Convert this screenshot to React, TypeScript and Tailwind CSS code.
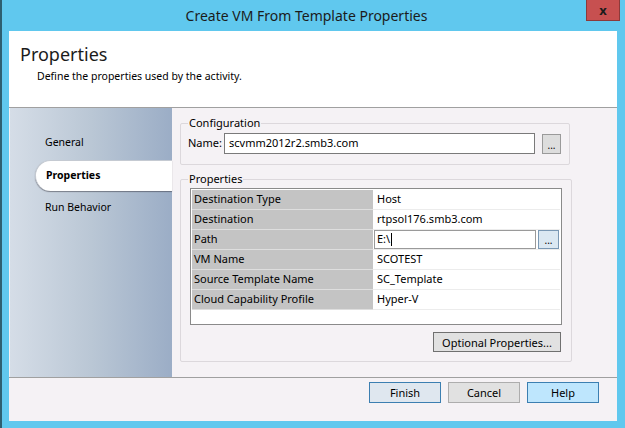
const rows: [string, string][] = [
  ['Destination Type', 'Host'],
  ['Destination', 'rtpsol176.smb3.com'],
  ['Path', 'E:\\'],
  ['VM Name', 'SCOTEST'],
  ['Source Template Name', 'SC_Template'],
  ['Cloud Capability Profile', 'Hyper-V'],
]

function Button({ label, variant = 'normal' }: { label: string; variant?: 'normal' | 'default' | 'hover' }) {
  const look =
    variant === 'default'
      ? 'bg-[#dfe7ef] border-[#3c7fb1]'
      : variant === 'hover'
        ? 'bg-[#bee6fd] border-[#3c7fb1]'
        : 'bg-[#e1e1e1] border-[#adadad]'
  return (
    <button className={`w-[72px] h-[21px] border text-[11px] text-black leading-none ${look}`}>{label}</button>
  )
}

export default function App() {
  return (
    <div className="w-[625px] h-[428px] bg-[#60c8ee] border-l-2 border-[#2e5f70] relative overflow-hidden font-['Noto_Sans',sans-serif] text-black">
      {/* Title bar */}
      <div className="h-[31px] flex items-center justify-center text-[14px] text-[#1b1b1b] pr-[14px]">
        Create VM From Template Properties
      </div>
      <div className="absolute top-0 right-[5px] w-[34px] h-[21px] bg-[#c75050] border border-t-0 border-[#8c3a3a] flex items-center justify-center text-[13px] font-bold text-[#1b1b1b] leading-none">
        x
      </div>

      <div className="ml-[7px] w-[608px] h-[390px] flex flex-col bg-[#f5f2f5]">
        {/* Header */}
        <div className="h-[77px] bg-white border-b border-[#a0a0a0] pl-[11px] pt-[11px]">
          <div className="text-[18px] leading-[24px] text-[#1b1b1b]">Properties</div>
          <div className="pl-[17px] mt-[3px] text-[10.5px] leading-[14px]">Define the properties used by the activity.</div>
        </div>

        {/* Middle */}
        <div className="h-[269px] flex">
          <div className="w-[162px] ml-[1px] bg-linear-to-r from-[#d5dde7] via-[#bac7d5] to-[#9badc6] pt-[25px] text-[10.5px]">
            <div className="pl-[35px] h-[20px] flex items-center">General</div>
            <div className="ml-[25px] mt-[7px] h-[31px] bg-white rounded-l-[16px] border-l border-t border-[#c5cad2] shadow-[0_1px_1px_rgba(60,60,70,0.55)] flex items-center pl-[10px] font-bold">
              Properties
            </div>
            <div className="pl-[35px] mt-[7px] h-[20px] flex items-center">Run Behavior</div>
          </div>

          <div className="flex-1 pl-[8px] pt-[8px] text-[11px]">
            {/* Configuration */}
            <fieldset className="w-[390px] border border-[#dcd8dc] rounded-[2px] px-[7px] pb-[10px]">
              <legend className="px-[1px] leading-[14px]">Configuration</legend>
              <div className="flex items-center mt-[3px]">
                <span className="w-[36px]">Name:</span>
                <div className="w-[311px] h-[21px] bg-white border border-[#7a7a7a] flex items-center pl-[4px]">
                  scvmm2012r2.smb3.com
                </div>
                <div className="ml-[7px] w-[19px] h-[20px] bg-[#dddddd] border border-[#9a9a9a] flex items-end justify-center pb-[3px] text-[10px] leading-none">
                  ...
                </div>
              </div>
            </fieldset>

            {/* Properties */}
            <fieldset className="mt-[7px] w-[390px] border border-[#dcd8dc] rounded-[2px] px-[9px] pb-[9px]">
              <legend className="-ml-[2px] px-[1px] leading-[14px]">Properties</legend>
              <div className="mt-[2px] w-[372px] h-[137px] bg-white border border-[#8a8a8a] p-[1px]">
                {rows.map(([label, value]) => (
                  <div key={label} className="flex h-[20px]">
                    <div className="w-[181px] bg-[#c4c4c4] border-b border-[#dedede] pl-[2px] flex items-center">{label}</div>
                    {label === 'Path' ? (
                      <div className="flex-1 flex border-b border-[#ececec]">
                        <div className="ml-[1px] w-[162px] h-[19px] border border-[#9a9a9a] flex items-center pl-[2px]">
                          {value}
                          <span className="ml-[1px] w-[1px] h-[13px] bg-black" />
                        </div>
                        <div className="ml-[2px] w-[21px] h-[19px] bg-[#dbe8f2] border border-[#7a98b4] flex items-end justify-center pb-[3px] text-[10px] leading-none">
                          ...
                        </div>
                      </div>
                    ) : (
                      <div className="flex-1 border-b border-[#ececec] pl-[4px] flex items-center">{value}</div>
                    )}
                  </div>
                ))}
              </div>
              <div className="mt-[7px] flex justify-end pr-[1px]">
                <button className="w-[128px] h-[20px] bg-[#e1e1e1] border border-[#707070] text-[11px] leading-none">
                  Optional Properties...
                </button>
              </div>
            </fieldset>
          </div>
        </div>

        {/* Footer */}
        <div className="h-[44px] border-t border-[#a0a0a0] flex justify-end items-start pt-[4px] pr-[18px] gap-[7px]">
          <Button label="Finish" variant="default" />
          <Button label="Cancel" />
          <Button label="Help" variant="hover" />
        </div>
      </div>
    </div>
  )
}
